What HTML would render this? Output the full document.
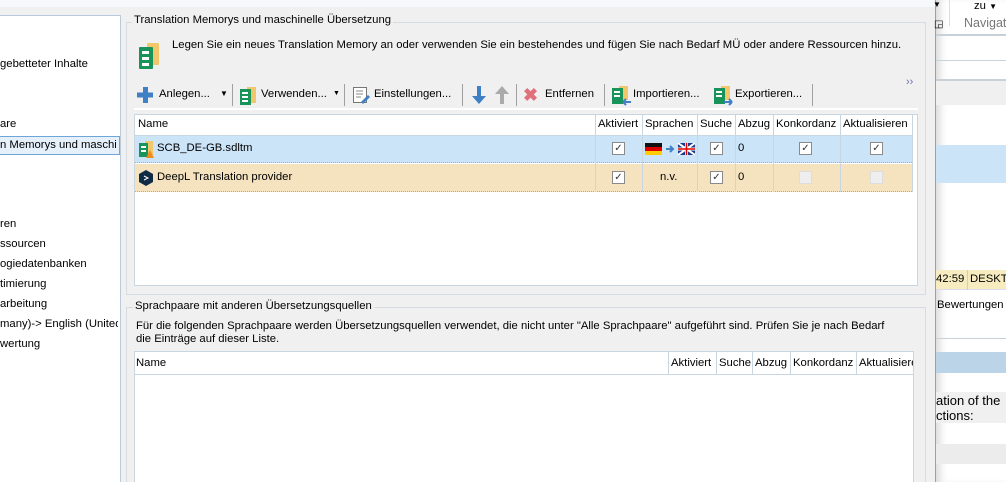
<!DOCTYPE html>
<html><head><meta charset="utf-8"><style>
*{margin:0;padding:0;box-sizing:border-box}
html,body{width:1006px;height:482px;overflow:hidden}
body{background:#f0f0f0;font-family:"Liberation Sans",sans-serif;font-size:11.3px;color:#000;position:relative}
.a{position:absolute;white-space:nowrap}
.cb{position:absolute;width:13px;height:13px;border:1px solid #8a8a8a;background:#fff;font-size:10px;line-height:11px;text-align:center;color:#333}
.cbd{border-color:#ddd;background:#eee}
.vl{position:absolute;width:1px;background:#c8d6e2}
.sep{position:absolute;width:1px;height:22px;background:#a0a0a0;top:84px}
</style></head><body>
<div class="a" style="left:0;top:0;width:935px;height:7px;background:#f6f8fb"></div>
<div class="a" style="left:0;top:15px;width:121px;height:467px;background:#fff;border-right:1px solid #b9cbdb;border-top:1px solid #b9cbdb"></div>
<div class="a" style="left:0;top:58px">gebetteter Inhalte</div>
<div class="a" style="left:0;top:118px">are</div>
<div class="a" style="left:0;top:136px;width:120px;height:19px;background:#e5f0fb;border:1px solid #6fa6d8;border-left:none"></div>
<div class="a" style="left:0;top:139px;width:119px;overflow:hidden">n Memorys und maschi</div>
<div class="a" style="left:0;top:218px">ren</div>
<div class="a" style="left:0;top:238px">ssourcen</div>
<div class="a" style="left:0;top:258px">ogiedatenbanken</div>
<div class="a" style="left:0;top:278px">timierung</div>
<div class="a" style="left:0;top:298px">arbeitung</div>
<div class="a" style="left:0;top:318px;width:118px;overflow:hidden">many)-&gt; English (United</div>
<div class="a" style="left:0;top:338px">wertung</div>
<div class="a" style="left:126px;top:22px;width:800px;height:273px;border:1px solid #d5dbe0"></div>
<div class="a" style="left:132px;top:14px;background:#f0f0f0;padding:0 2px">Translation Memorys und maschinelle Übersetzung</div>
<svg class="a" style="left:137px;top:42px" width="26" height="28"><rect x="10" y="1" width="12" height="22" fill="#f2c66b" rx="1"/><rect x="2" y="5" width="14" height="22" fill="#18935a" rx="1"/><rect x="5" y="9" width="7" height="3" fill="#fff"/><rect x="5" y="15" width="7" height="3" fill="#fff"/><rect x="5" y="21" width="7" height="3" fill="#fff"/></svg>
<div class="a" style="left:172px;top:39px">Legen Sie ein neues Translation Memory an oder verwenden Sie ein bestehendes und fügen Sie nach Bedarf MÜ oder andere Ressourcen hinzu.</div>
<svg class="a" style="left:137px;top:87px" width="16" height="16"><rect x="6" y="0" width="5" height="16" fill="#3f7fc4"/><rect x="0" y="5.5" width="16" height="5" fill="#3f7fc4"/></svg>
<div class="a" style="left:159px;top:88px">Anlegen...</div>
<div class="a" style="left:220px;top:89px;font-size:8px">▼</div>
<div class="sep" style="left:232px"></div>
<svg class="a" style="left:239px;top:87px" width="18" height="18"><rect x="8" y="0" width="9" height="16" fill="#f2c66b"/><rect x="1" y="2" width="11" height="16" fill="#18935a"/><rect x="3" y="5" width="6" height="2" fill="#fff"/><rect x="3" y="9" width="6" height="2" fill="#fff"/><rect x="3" y="13" width="6" height="2" fill="#fff"/></svg>
<div class="a" style="left:261px;top:88px">Verwenden...</div>
<div class="a" style="left:333px;top:90px;font-size:7px">▼</div>
<div class="sep" style="left:344px"></div>
<svg class="a" style="left:352px;top:86px" width="18" height="18"><rect x="1.5" y="1.5" width="13" height="15" fill="#fff" stroke="#777"/><line x1="4" y1="5" x2="11" y2="5" stroke="#888"/><line x1="4" y1="8" x2="11" y2="8" stroke="#888"/><line x1="4" y1="11" x2="9" y2="11" stroke="#888"/><path d="M9 16 L16 9 L18 11 L11 18Z" fill="#3f7fc4"/></svg>
<div class="a" style="left:374px;top:88px">Einstellungen...</div>
<div class="sep" style="left:462px"></div>
<svg class="a" style="left:471px;top:86px" width="16" height="18"><rect x="6" y="0" width="4" height="12" fill="#3f7fc4"/><path d="M1 10 L15 10 L8 18Z" fill="#3f7fc4"/></svg>
<svg class="a" style="left:494px;top:86px" width="16" height="18"><rect x="6" y="6" width="4" height="12" fill="#aaa"/><path d="M1 8 L15 8 L8 0Z" fill="#aaa"/></svg>
<div class="sep" style="left:516px"></div>
<div class="a" style="left:523px;top:85px;color:#e0707a;font-size:18px;font-weight:bold">✖</div>
<div class="a" style="left:545px;top:88px">Entfernen</div>
<div class="sep" style="left:604px"></div>
<svg class="a" style="left:611px;top:86px" width="20" height="20"><rect x="8" y="0" width="9" height="14" fill="#f2c66b"/><rect x="1" y="2" width="11" height="16" fill="#18935a"/><rect x="3" y="5" width="6" height="2" fill="#fff"/><rect x="3" y="9" width="6" height="2" fill="#fff"/><path d="M20 16 L12 16 M12 16 L15 13 M12 16 L15 19" stroke="#3f7fc4" stroke-width="2" fill="none"/></svg>
<div class="a" style="left:633px;top:88px">Importieren...</div>
<svg class="a" style="left:713px;top:86px" width="20" height="20"><rect x="8" y="0" width="9" height="14" fill="#f2c66b"/><rect x="1" y="2" width="11" height="16" fill="#18935a"/><rect x="3" y="5" width="6" height="2" fill="#fff"/><rect x="3" y="9" width="6" height="2" fill="#fff"/><path d="M11 16 L19 16 M19 16 L16 13 M19 16 L16 19" stroke="#3f7fc4" stroke-width="2" fill="none"/></svg>
<div class="a" style="left:735px;top:88px">Exportieren...</div>
<div class="sep" style="left:812px"></div>
<div class="a" style="left:906px;top:76px;color:#6b6fa8;font-size:11px">››</div>
<div class="a" style="left:134px;top:108px;width:784px;height:2px;background:#fff"></div>
<div class="a" style="left:134px;top:114px;width:784px;height:172px;background:#fff;border:1px solid #c8d6e2"></div>
<div class="a" style="left:135px;top:135px;width:777px;height:1px;background:#c8d6e2"></div>
<div class="a" style="left:135px;top:136px;width:777px;height:27px;background:#cce4f7;border-bottom:1px dotted #aab"></div>
<div class="a" style="left:135px;top:164px;width:777px;height:28px;background:#f5e3c0;border-bottom:1px dotted #aab"></div>
<div class="vl" style="left:595px;top:115px;height:77px"></div>
<div class="vl" style="left:642px;top:115px;height:77px"></div>
<div class="vl" style="left:697px;top:115px;height:77px"></div>
<div class="vl" style="left:735px;top:115px;height:77px"></div>
<div class="vl" style="left:773px;top:115px;height:77px"></div>
<div class="vl" style="left:840px;top:115px;height:77px"></div>
<div class="vl" style="left:912px;top:115px;height:77px"></div>
<div class="a" style="left:138px;top:118px">Name</div>
<div class="a" style="left:598px;top:118px">Aktiviert</div>
<div class="a" style="left:645px;top:118px">Sprachen</div>
<div class="a" style="left:700px;top:118px">Suche</div>
<div class="a" style="left:738px;top:118px">Abzug</div>
<div class="a" style="left:776px;top:118px">Konkordanz</div>
<div class="a" style="left:843px;top:118px">Aktualisieren</div>
<svg class="a" style="left:138px;top:141px" width="16" height="18"><rect x="7" y="0" width="8" height="14" fill="#f2c66b"/><rect x="1" y="2" width="9" height="14" fill="#18935a"/><rect x="3" y="5" width="5" height="2" fill="#fff"/><rect x="3" y="9" width="5" height="2" fill="#fff"/><path d="M8 17 L12 9 L16 17Z" fill="#f08c1e"/></svg>
<div class="a" style="left:157px;top:142px">SCB_DE-GB.sdltm</div>
<svg class="a" style="left:139px;top:170px" width="14" height="16"><path d="M7 0 L14 4 L14 12 L7 16 L0 12 L0 4Z" fill="#0f2b46"/><path d="M5 6 L9 8 L5 10" stroke="#fff" fill="none"/></svg>
<div class="a" style="left:157px;top:171px">DeepL Translation provider</div>
<div class="cb" style="left:612px;top:142px">✓</div>
<div class="cb" style="left:710px;top:142px">✓</div>
<div class="cb" style="left:799px;top:142px">✓</div>
<div class="cb" style="left:870px;top:142px">✓</div>
<div class="cb" style="left:612px;top:171px">✓</div>
<div class="cb" style="left:710px;top:171px">✓</div>
<div class="cb cbd" style="left:799px;top:171px"></div>
<div class="cb cbd" style="left:870px;top:171px"></div>
<svg class="a" style="left:645px;top:143px" width="50" height="12"><rect x="0" y="0" width="17" height="4" fill="#111"/><rect x="0" y="4" width="17" height="4" fill="#d00"/><rect x="0" y="8" width="17" height="4" fill="#fc0"/><path d="M21 6 L28 6 M25 3 L28 6 L25 9" stroke="#3f7fc4" stroke-width="2" fill="none"/><rect x="33" y="0" width="17" height="12" fill="#1d3b8a"/><path d="M33 0 L50 12 M50 0 L33 12" stroke="#fff" stroke-width="2"/><path d="M41.5 0 V12 M33 6 H50" stroke="#fff" stroke-width="3"/><path d="M41.5 0 V12 M33 6 H50" stroke="#d00" stroke-width="1.5"/></svg>
<div class="a" style="left:738px;top:142px">0</div>
<div class="a" style="left:738px;top:171px">0</div>
<div class="a" style="left:660px;top:171px">n.v.</div>
<div class="a" style="left:126px;top:307px;width:800px;height:180px;border:1px solid #d5dbe0"></div>
<div class="a" style="left:133px;top:300px;background:#f0f0f0;padding:0 2px">Sprachpaare mit anderen Übersetzungsquellen</div>
<div class="a" style="left:136px;top:320px">Für die folgenden Sprachpaare werden Übersetzungsquellen verwendet, die nicht unter "Alle Sprachpaare" aufgeführt sind. Prüfen Sie je nach Bedarf</div>
<div class="a" style="left:136px;top:333px">die Einträge auf dieser Liste.</div>
<div class="a" style="left:134px;top:351px;width:780px;height:140px;background:#fff;border:1px solid #c8d6e2"></div>
<div class="a" style="left:135px;top:374px;width:778px;height:1px;background:#c8d6e2"></div>
<div class="vl" style="left:668px;top:352px;height:22px"></div>
<div class="vl" style="left:716px;top:352px;height:22px"></div>
<div class="vl" style="left:752px;top:352px;height:22px"></div>
<div class="vl" style="left:790px;top:352px;height:22px"></div>
<div class="vl" style="left:856px;top:352px;height:22px"></div>
<div class="a" style="left:136px;top:357px">Name</div>
<div class="a" style="left:671px;top:357px">Aktiviert</div>
<div class="a" style="left:719px;top:357px">Suche</div>
<div class="a" style="left:755px;top:357px">Abzug</div>
<div class="a" style="left:793px;top:357px">Konkordanz</div>
<div class="a" style="left:859px;top:357px;width:54px;overflow:hidden">Aktualisieren</div>
<div class="a" style="left:935px;top:0;width:71px;height:482px;background:#fff;border-left:1px solid #9aa0a6;box-shadow:inset 8px 0 8px -4px rgba(0,0,0,0.15)"></div>
<div class="a" style="left:933px;top:0;font-size:8px">▼</div>
<div class="a" style="left:934px;top:19px;font-size:10px">◲</div>
<div class="a" style="left:949px;top:0;width:1px;height:26px;background:#ddd"></div>
<div class="a" style="left:974px;top:0">zu <span style="font-size:8px">▼</span></div>
<div class="a" style="left:964px;top:16px;color:#777;font-size:12.5px">Navigat</div>
<div class="a" style="left:936px;top:34px;width:70px;height:2px;background:#c8d0d8"></div>
<div class="a" style="left:936px;top:60px;width:70px;height:1px;background:#c8d4dc"></div>
<div class="a" style="left:936px;top:79px;width:70px;height:2px;background:#c8d0d8"></div>
<div class="a" style="left:936px;top:81px;width:70px;height:24px;background:#f0f0f0"></div>
<div class="a" style="left:936px;top:145px;width:70px;height:38px;background:#cce4f7"></div>
<div class="a" style="left:936px;top:270px;width:70px;height:20px;background:#f6ecbf;border-bottom:1px solid #dde"></div>
<div class="a" style="left:967px;top:270px;width:1px;height:20px;background:#ccc"></div>
<div class="a" style="left:936px;top:273px">42:59</div>
<div class="a" style="left:970px;top:273px">DESKTOP</div>
<div class="a" style="left:937px;top:299px">Bewertungen (</div>
<div class="a" style="left:936px;top:338px;width:70px;height:1px;background:#c8d0d8"></div>
<div class="a" style="left:936px;top:352px;width:70px;height:21px;background:#bcd4e8"></div>
<div class="a" style="left:936px;top:392px;width:70px;height:31px;background:#f0f0f0"></div>
<div class="a" style="left:936px;top:393px;font-size:13px">ation of the</div>
<div class="a" style="left:936px;top:408px;font-size:13px">ctions:</div>
<div class="a" style="left:936px;top:444px;width:70px;height:20px;background:#ececec"></div>
</body></html>
